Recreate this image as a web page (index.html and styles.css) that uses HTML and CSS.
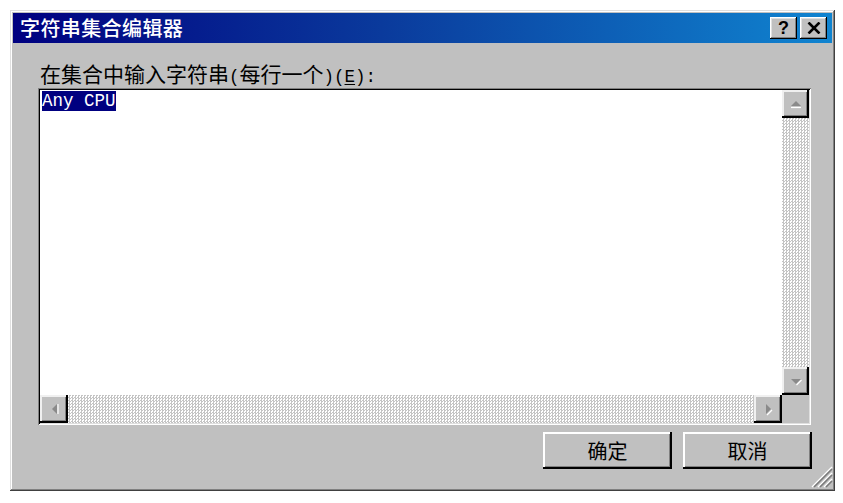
FILE: index.html
```html
<!DOCTYPE html>
<html lang="zh-CN">
<head>
<meta charset="utf-8">
<title>字符串集合编辑器</title>
<link rel="stylesheet" href="styles.css">
</head>
<body>
<div class="window">
  <div class="titlebar">
    <span class="title">字符串集合编辑器</span>
    <div class="tbtns">
      <span class="tbtn help">?</span>
      <span class="tbtn close"><svg width="14" height="12" viewBox="0 0 14 12"><path d="M1.5 0.5 L12.5 11.5 M12.5 0.5 L1.5 11.5" stroke="#000" stroke-width="2.6" fill="none"/></svg></span>
    </div>
  </div>
  <div class="content">
    <div class="label">在集合中输入字符串<span class="asc">(</span>每行一个<span class="asc">)(<u>E</u>):</span></div>
    <div class="field">
      <div class="editor">
        <div class="text"><span class="sel">Any CPU</span></div>
        <div class="vscroll">
          <span class="sbtn"><svg width="14" height="9" viewBox="0 0 14 9"><path d="M7 1 L12 6 L2 6 Z" fill="#8a8a8a"/><path d="M2 7.5 H12" stroke="#fff" stroke-width="1.2"/></svg></span>
          <span class="track"></span>
          <span class="sbtn"><svg width="14" height="9" viewBox="0 0 14 9"><path d="M2 2 L12 2 L7 7 Z" fill="#8a8a8a"/><path d="M7.5 8 L12.5 3" stroke="#fff" stroke-width="1.2"/></svg></span>
        </div>
        <div class="hscroll">
          <span class="sbtn"><svg width="9" height="14" viewBox="0 0 9 14"><path d="M2 7 L7 2 L7 12 Z" fill="#8a8a8a"/><path d="M8 2 V12" stroke="#fff" stroke-width="1.2"/></svg></span>
          <span class="track"></span>
          <span class="sbtn"><svg width="9" height="14" viewBox="0 0 9 14"><path d="M7 7 L2 2 L2 12 Z" fill="#8a8a8a"/><path d="M3 13 L8 8" stroke="#fff" stroke-width="1.2"/></svg></span>
        </div>
        <div class="corner"></div>
      </div>
    </div>
    <div class="buttons">
      <button class="btn">确定</button>
      <button class="btn">取消</button>
    </div>
  </div>
  <svg class="grip" width="24" height="24" viewBox="0 0 24 24">
    <path d="M23 3 L3 23" stroke="#fff" stroke-width="1.4"/>
    <path d="M23 5 L5 23" stroke="#7a7a7a" stroke-width="1.6"/>
    <path d="M23 9 L9 23" stroke="#fff" stroke-width="1.4"/>
    <path d="M23 11 L11 23" stroke="#7a7a7a" stroke-width="1.6"/>
    <path d="M23 15 L15 23" stroke="#fff" stroke-width="1.4"/>
    <path d="M23 17 L17 23" stroke="#7a7a7a" stroke-width="1.6"/>
  </svg>
</div>
</body>
</html>
```
FILE: styles.css
```css
html, body {
  margin: 0;
  padding: 0;
  background: #ffffff;
}
body {
  font-family: "Noto Sans CJK SC", "Liberation Sans", sans-serif;
}
.window {
  position: relative;
  margin: 10px 0 0 10px;
  width: 825px;
  height: 481px;
  box-sizing: border-box;
  padding: 3px;
  background: #c0c0c0;
  box-shadow: inset -1px -1px #404040, inset 1px 1px #dfdfdf, inset -2px -2px #808080, inset 2px 2px #ffffff;
  display: flex;
  flex-direction: column;
}
.titlebar {
  height: 30px;
  background: linear-gradient(90deg, #000080 0%, #0a3a9c 45%, #1084d0 100%);
  display: flex;
  align-items: center;
  justify-content: space-between;
  padding: 0 5px 0 7px;
}
.title {
  color: #ffffff;
  font-size: 20px;
  font-weight: 500;
  line-height: 30px;
  letter-spacing: 0.4px;
}
.tbtns {
  display: flex;
  gap: 3px;
}
.tbtn {
  width: 27px;
  height: 22px;
  box-sizing: border-box;
  background: #c0c0c0;
  box-shadow: inset -1px -1px #000, inset 1px 1px #fff, inset -2px -2px #808080, inset 2px 2px #dfdfdf;
  display: flex;
  align-items: center;
  justify-content: center;
}
.help {
  font-family: "Liberation Sans", sans-serif;
  font-weight: bold;
  font-size: 18px;
  line-height: 22px;
  color: #000;
}
.content {
  flex: 1;
  display: flex;
  flex-direction: column;
  padding: 18px 21px 0 25px;
}
.label {
  font-size: 21px;
  line-height: 24px;
  height: 24px;
  color: #000;
  padding-left: 2px;
  white-space: nowrap;
}
.asc {
  font-family: "Liberation Mono", monospace;
  font-size: 17.5px;
}
.asc u {
  text-decoration-thickness: 1px;
  text-underline-offset: 2px;
}
.field {
  margin-top: 3px;
  width: 773px;
  height: 337px;
  box-sizing: border-box;
  padding: 2px;
  background: #ffffff;
  box-shadow: inset 1px 1px #808080, inset -1px -1px #ffffff, inset 2px 2px #000000, inset -2px -2px #dfdfdf;
}
.editor {
  width: 100%;
  height: 100%;
  display: grid;
  grid-template-columns: 1fr 27px;
  grid-template-rows: 1fr 28px;
}
.text {
  padding: 2px 0 0 2px;
  font-family: "Liberation Mono", monospace;
  font-size: 17.5px;
  line-height: 18px;
  background: #fff;
}
.sel {
  background: #000080;
  color: #ffffff;
}
.vscroll {
  display: flex;
  flex-direction: column;
}
.hscroll {
  display: flex;
}
.track {
  flex: 1;
  background: repeating-conic-gradient(#c4c4c4 0 25%, #ffffff 0 50%) 0 0 / 3px 3px;
}
.sbtn {
  width: 27px;
  height: 28px;
  flex: none;
  box-sizing: border-box;
  background: #c0c0c0;
  box-shadow: inset -2px -2px #000, inset 2px 2px #f0f0f0, inset -3px -3px #808080;
  display: flex;
  align-items: center;
  justify-content: center;
}
.hscroll .sbtn {
  width: 28px;
}
.corner {
  background: #c0c0c0;
}
.buttons {
  margin-top: 7px;
  margin-right: -1px;
  display: flex;
  justify-content: flex-end;
  gap: 11px;
}
.btn {
  width: 129px;
  height: 37px;
  padding: 0;
  border: none;
  background: #c0c0c0;
  box-shadow: inset -2px -2px #000, inset 2px 2px #ffffff, inset -3px -3px #808080;
  font-family: "Noto Sans CJK SC", sans-serif;
  font-size: 20px;
  line-height: 37px;
  color: #000;
}
.grip {
  position: absolute;
  right: 2px;
  bottom: 3px;
}
```
